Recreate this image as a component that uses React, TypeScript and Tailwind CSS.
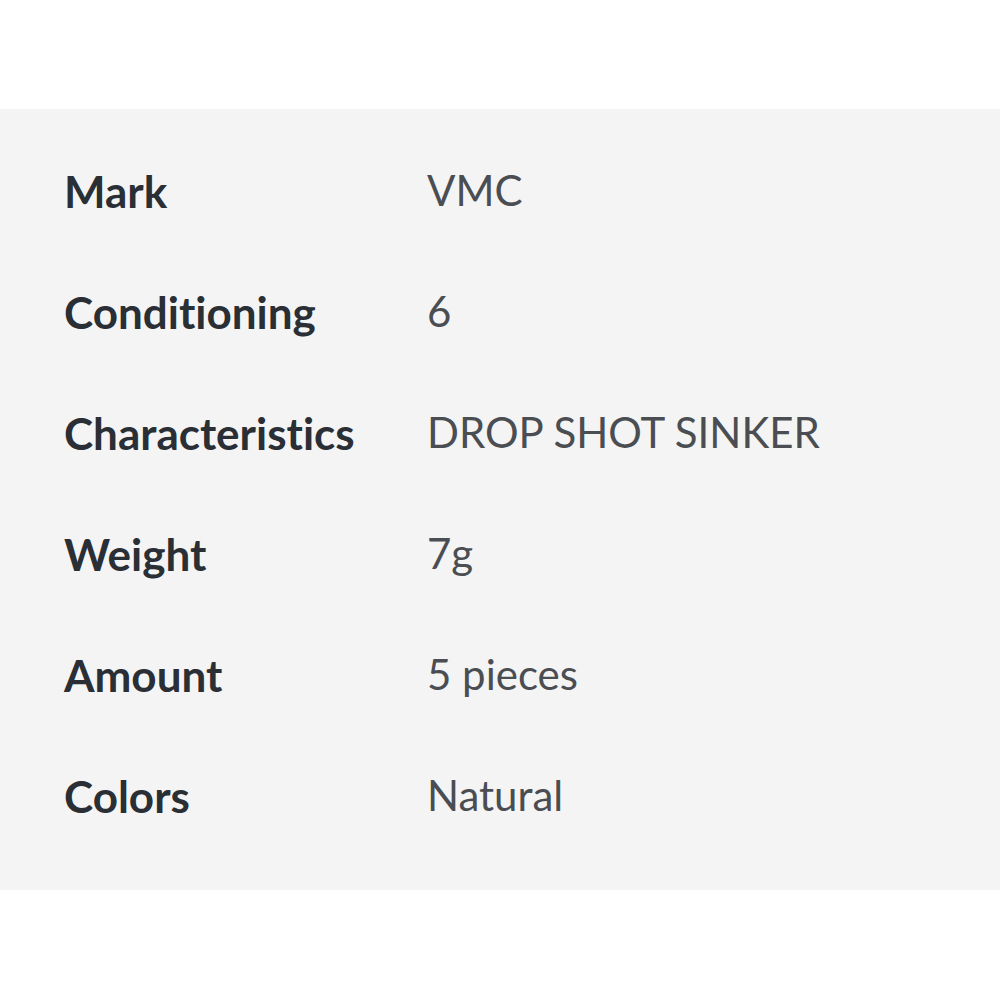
export default function App() {
  const rows: [string, string][] = [
    ["Mark", "VMC"],
    ["Conditioning", "6"],
    ["Characteristics", "DROP SHOT SINKER"],
    ["Weight", "7g"],
    ["Amount", "5 pieces"],
    ["Colors", "Natural"],
  ];
  return (
    <div className="w-[1000px] h-[1000px] bg-white pt-[109px] [font-variant-ligatures:none]" style={{ fontFamily: "Lato, 'Noto Sans', sans-serif" }}>
      <div className="bg-[#f4f4f4] h-[781px] pt-[21px] pl-[64px]">
        {rows.map(([k, v]) => (
          <div key={k} className="flex items-center h-[121px]">
            <div className="w-[363px] text-[44px] font-bold text-[#2a2e35]">{k}</div>
            <div className="text-[42px] text-[#4a4d52]">{v}</div>
          </div>
        ))}
      </div>
    </div>
  );
}
